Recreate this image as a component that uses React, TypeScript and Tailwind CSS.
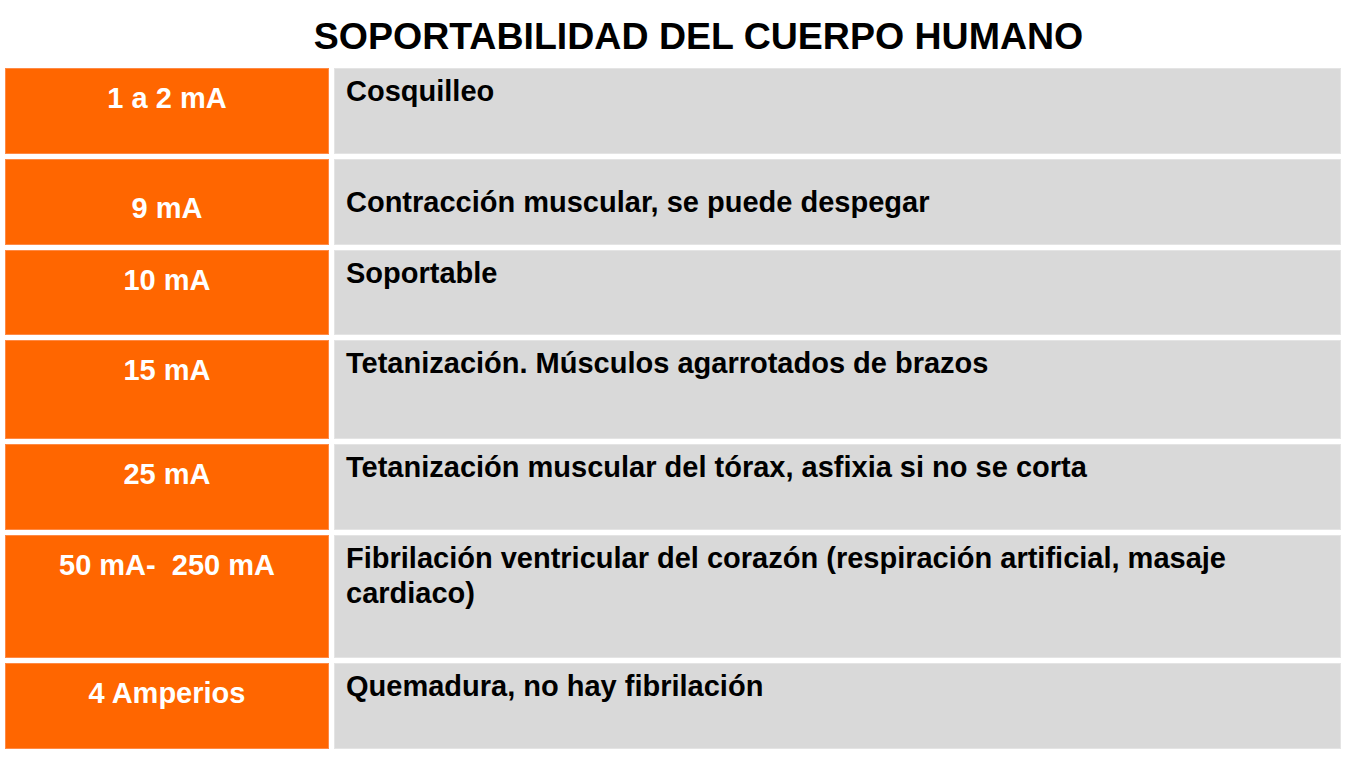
import React from "react";

type Row = { amp: string; desc: string; h: string; center?: boolean };

const rows: Row[] = [
  { amp: "1 a 2 mA", desc: "Cosquilleo", h: "h-[86px]" },
  { amp: "9 mA", desc: "Contracción muscular, se puede despegar", h: "h-[86px]", center: true },
  { amp: "10 mA", desc: "Soportable", h: "h-[85px]" },
  { amp: "15 mA", desc: "Tetanización. Músculos agarrotados de brazos", h: "h-[99px]" },
  { amp: "25 mA", desc: "Tetanización muscular del tórax, asfixia si no se corta", h: "h-[86px]" },
  {
    amp: "50 mA-\u00a0 250 mA",
    desc: "Fibrilación ventricular del corazón (respiración artificial, masaje cardiaco)",
    h: "h-[123px]",
  },
  { amp: "4 Amperios", desc: "Quemadura, no hay fibrilación", h: "h-[86px]" },
];

export default function App() {
  return (
    <div
      className="w-[1349px] h-[757px] bg-white overflow-hidden"
      style={{ fontFamily: '"Liberation Sans", Arial, sans-serif' }}
    >
      <div className="h-[68px] pt-[17px] pl-[48px] text-center">
        <h1 className="text-[37.5px] leading-[38px] font-bold text-black">
          SOPORTABILIDAD DEL CUERPO HUMANO
        </h1>
      </div>
      <div className="flex flex-col gap-[5px] pl-[5px]">
        {rows.map((r, i) => (
          <div key={i} className={`flex gap-[5px] ${r.h}`}>
            <div
              className={`w-[324px] bg-[#ff6600] border border-[#ff8a45] text-white text-center font-bold text-[29px] leading-[35px] ${
                r.center ? "pt-[31px]" : "pt-[12px]"
              }`}
            >
              {r.amp}
            </div>
            <div
              className={`w-[1007px] bg-[#d9d9d9] border border-[#e4e4e4] text-black font-bold text-[29px] leading-[35px] pl-[11px] pr-[20px] ${
                r.center ? "pt-[25px]" : "pt-[5px]"
              }`}
            >
              {r.desc}
            </div>
          </div>
        ))}
      </div>
    </div>
  );
}
